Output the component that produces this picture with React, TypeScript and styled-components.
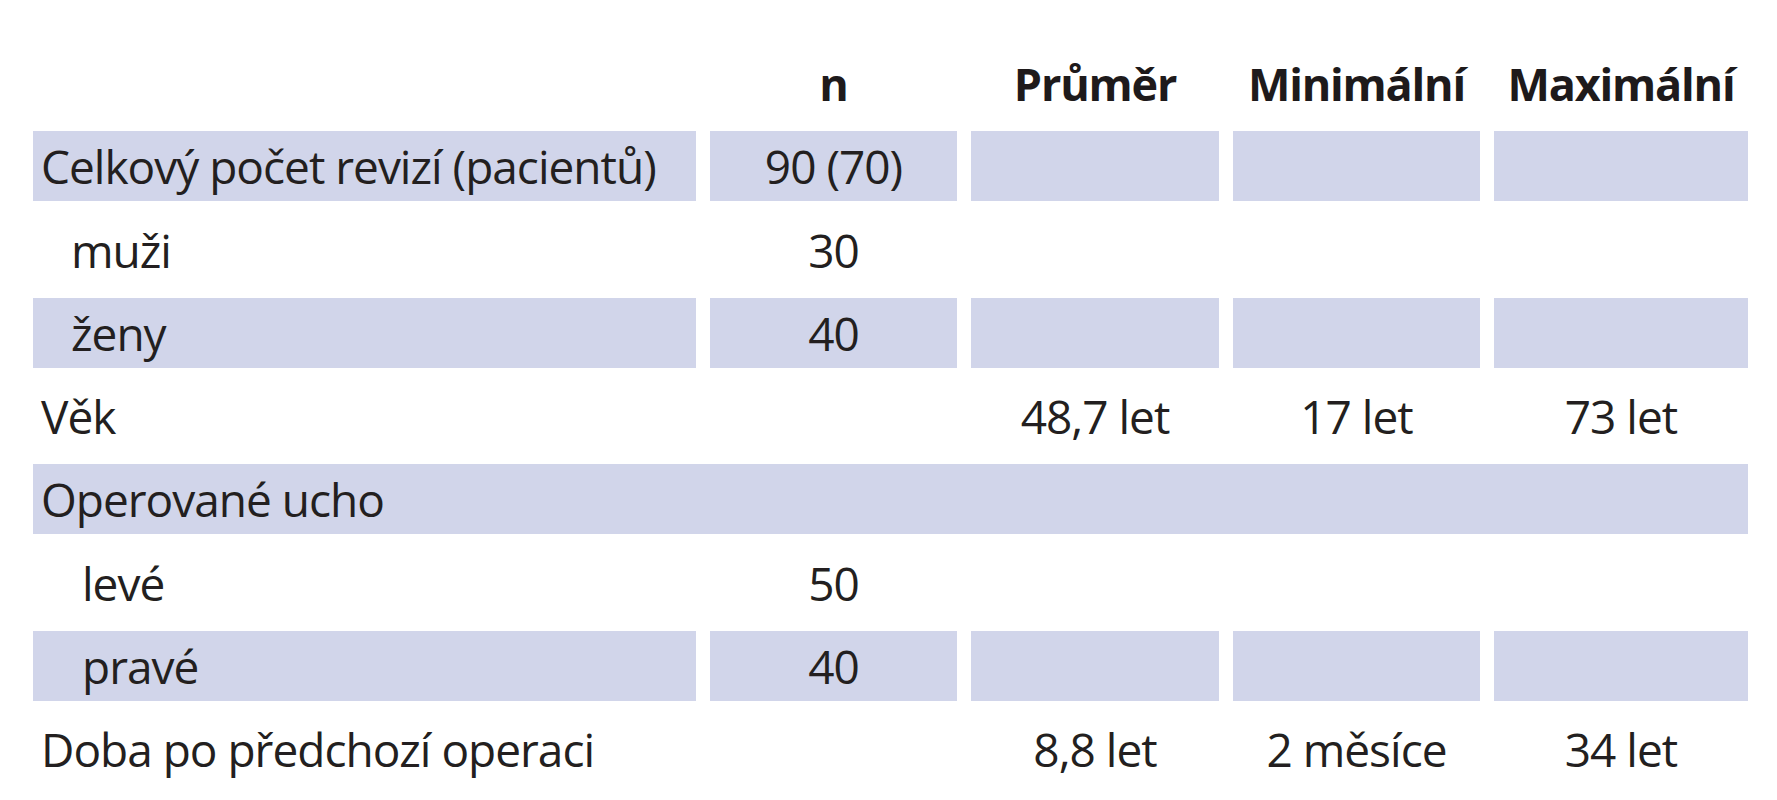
import * as React from 'react';
import styled, { createGlobalStyle } from 'styled-components';

const GlobalStyle = createGlobalStyle`
    html, body {
        margin: 0;
        padding: 0;
        background: #ffffff;
    }
    body {
        font-family: "Open Sans", "Noto Sans", sans-serif;
        color: #231f20;
    }
`;

const Page = styled.div`
    padding: 48px 0 0 33px;
`;

const Table = styled.div`
    display: grid;
    grid-template-columns: 663px 247px 248px 247px 254px;
    grid-auto-rows: 70px;
    column-gap: 14px;
    row-gap: 13.3px;
`;

const Cell = styled.div<{ $shaded?: boolean }>`
    display: flex;
    align-items: center;
    background-color: ${props => props.$shaded ? '#d1d5ea' : 'transparent'};
    font-size: 46px;
    letter-spacing: -1px;
    line-height: 1;
    white-space: nowrap;
`;

const HeadCell = styled(Cell)`
    justify-content: center;
    font-weight: 700;
    font-size: 45px;
    letter-spacing: -1.2px;
    color: #1e1a1b;
`;

const LabelCell = styled(Cell)<{ $indent?: number }>`
    padding-left: ${props => props.$indent === 2 ? '49px' : props.$indent === 1 ? '38px' : '8px'};
`;

const SpanCell = styled(Cell)`
    grid-column: 1 / -1;
    padding-left: 8px;
`;

const ValueCell = styled(Cell)`
    justify-content: center;
`;

interface Row {
    label: string,
    indent?: number,
    shaded?: boolean,
    span?: boolean,
    values?: string[],
}

const columns = ['n', 'Průměr', 'Minimální', 'Maximální'];

const rows: Row[] = [
    { label: 'Celkový počet revizí (pacientů)', shaded: true, values: ['90 (70)', '', '', ''] },
    { label: 'muži', indent: 1, values: ['30', '', '', ''] },
    { label: 'ženy', indent: 1, shaded: true, values: ['40', '', '', ''] },
    { label: 'Věk', values: ['', '48,7 let', '17 let', '73 let'] },
    { label: 'Operované ucho', shaded: true, span: true },
    { label: 'levé', indent: 2, values: ['50', '', '', ''] },
    { label: 'pravé', indent: 2, shaded: true, values: ['40', '', '', ''] },
    { label: 'Doba po předchozí operaci', values: ['', '8,8 let', '2 měsíce', '34 let'] },
];

export default function App() {
    return (
        <Page>
            <GlobalStyle />
            <Table>
                <Cell />
                {columns.map(c => <HeadCell key={c}>{c}</HeadCell>)}
                {rows.map(row => row.span
                    ? <SpanCell key={row.label} $shaded={row.shaded}>{row.label}</SpanCell>
                    : (
                        <React.Fragment key={row.label}>
                            <LabelCell $shaded={row.shaded} $indent={row.indent}>{row.label}</LabelCell>
                            {(row.values || []).map((v, i) => (
                                <ValueCell key={i} $shaded={row.shaded}>{v}</ValueCell>
                            ))}
                        </React.Fragment>
                    )
                )}
            </Table>
        </Page>
    );
}
